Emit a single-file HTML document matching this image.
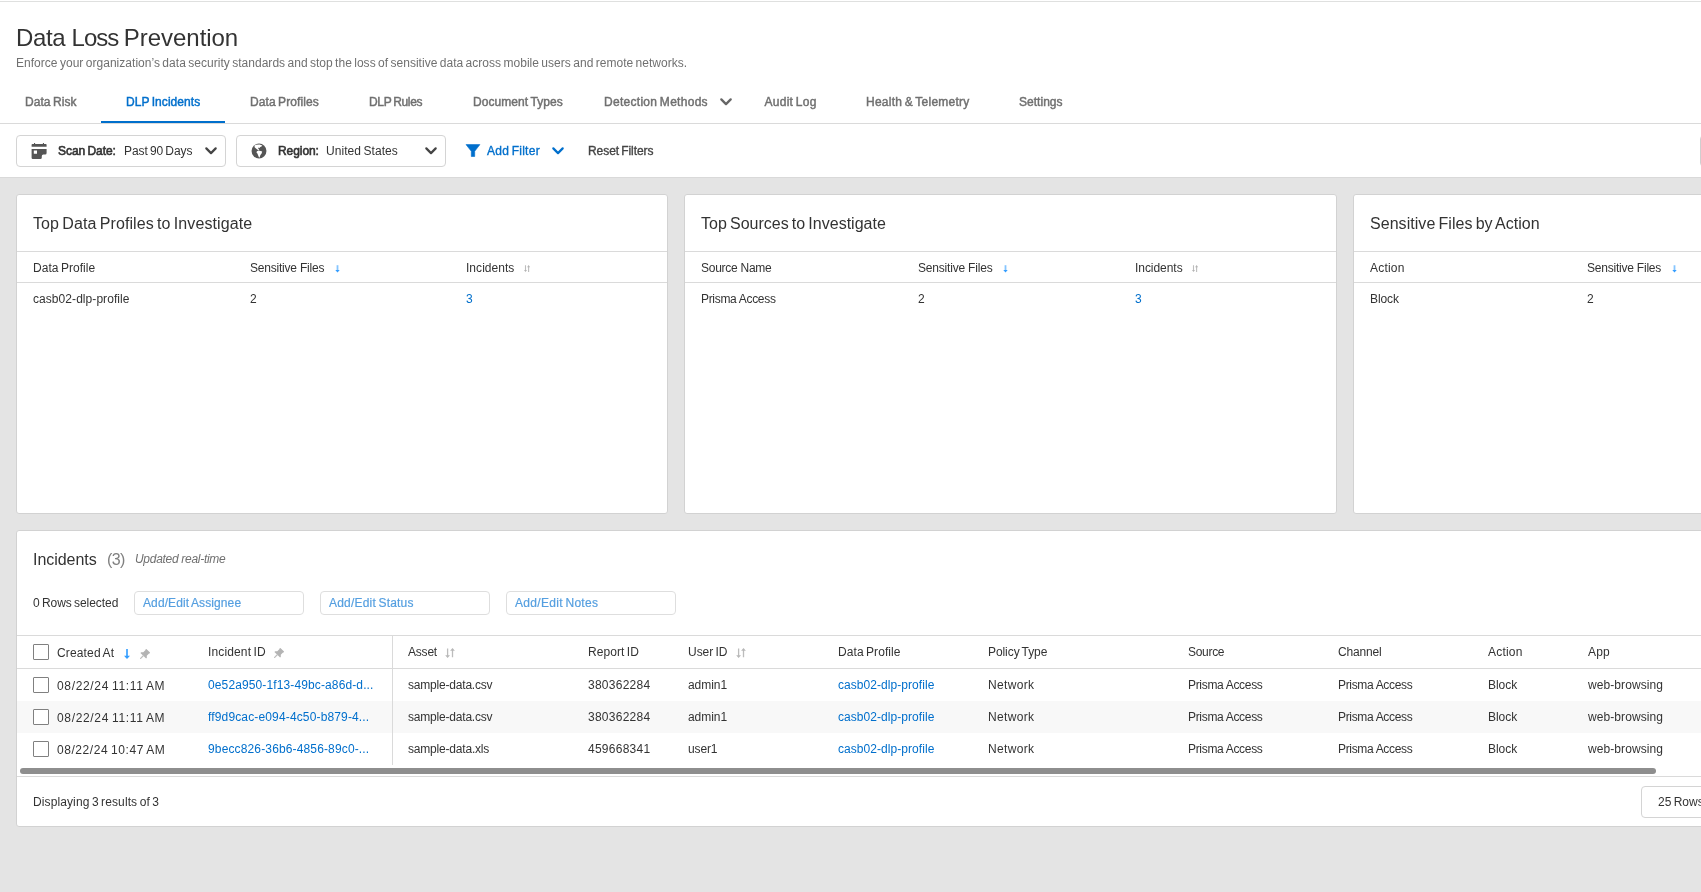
<!DOCTYPE html>
<html lang="en">
<head>
<meta charset="utf-8">
<title>Data Loss Prevention</title>
<style>
*{box-sizing:border-box;margin:0;padding:0}
html,body{width:1701px;height:892px;overflow:hidden;background:#e4e4e4}
body{font-family:"Liberation Sans",sans-serif;font-size:12px;color:#333;position:relative;-webkit-font-smoothing:antialiased}
a{color:#006fcc;text-decoration:none}
svg{display:block}
#app{position:absolute;left:0;top:0;width:1701px;height:892px;will-change:transform}
.abs{position:absolute}
.t{position:absolute;white-space:nowrap;line-height:16px;word-spacing:-0.085em}

/* ---------- header ---------- */
#top{position:absolute;left:0;top:0;width:1701px;height:177px;background:#fff}
#topline{position:absolute;left:0;top:1px;width:1701px;height:1px;background:#dfe0df}
#title{left:16px;top:22px;font-size:24px;line-height:32px;height:32px;width:230px;color:#333;font-weight:400}
#subtitle{left:16px;top:55px;font-size:12px;line-height:16px;color:#707070}

/* ---------- tabs ---------- */
#tabs{position:absolute;left:0;top:80px;width:1701px;height:44px;border-bottom:1px solid #dadada}
#tabs .tab{position:absolute;top:14px;line-height:16px;font-size:12px;font-weight:400;color:#707070;white-space:nowrap;-webkit-text-stroke:0.45px currentColor;word-spacing:-0.085em}
#tabs .tab.on{color:#006fcc}
#tabline{position:absolute;left:101px;top:41px;width:124px;height:2px;background:#006fcc}

/* ---------- filter bar ---------- */
#filters{position:absolute;left:0;top:124px;width:1701px;height:54px;background:#fff;border-bottom:1px solid #d9d9d9}
.dd{position:absolute;top:11px;height:32px;width:210px;border:1px solid #d4d4d4;border-radius:4px;background:#fff}
.dd b{font-weight:400;-webkit-text-stroke:0.6px currentColor}

/* ---------- cards ---------- */
.card{position:absolute;top:194px;height:320px;background:#fff;border:1px solid #d2d2d2;border-radius:3px;overflow:hidden}
.card h2{word-spacing:-0.085em;position:absolute;left:16px;top:19px;font-size:16px;line-height:20px;font-weight:400;color:#333;white-space:nowrap}
.card .hr1{position:absolute;left:0;right:0;top:56px;height:1px;background:#dadada}
.card .hr2{position:absolute;left:0;right:0;top:87px;height:1px;background:#dadada}
.card .th{top:65px}
.card .td{top:96px}

/* ---------- incidents ---------- */
#inc{position:absolute;left:16px;top:530px;width:1700px;height:297px;background:#fff;border:1px solid #d2d2d2;border-radius:3px 0 0 3px;overflow:hidden}
.btn{position:absolute;top:60px;width:170px;height:24px;border:1px solid #dedede;border-radius:4px;background:#fff}
.btn .t{left:8px;top:3px;color:#559fe0;-webkit-text-stroke:0.2px currentColor}
.row{position:absolute;left:0;width:1700px;height:32px}
.row.alt{background:#f8f8f8}
.cb{position:absolute;left:16px;top:8px;width:16px;height:16px;border:1px solid #808080;border-radius:1px;background:#fff}
.row .t{top:8px}
/*FIT-START*/
#tw1{letter-spacing:-0.326px;word-spacing:0em}
#tw2{letter-spacing:-0.96px;word-spacing:0em}
#tw3{letter-spacing:-0.035px;word-spacing:-0.085em}
#subtitle{letter-spacing:0.032px;word-spacing:-0.085em}
#tb1{letter-spacing:0.067px;word-spacing:-0.085em}
#tb2{letter-spacing:0.063px;word-spacing:-0.085em}
#tb3{letter-spacing:0.086px;word-spacing:-0.085em}
#tb4{letter-spacing:-0.327px;word-spacing:0em}
#tb5{letter-spacing:0.071px;word-spacing:-0.085em}
#tb6{letter-spacing:0.285px;word-spacing:-0.085em}
#tb7{letter-spacing:0.268px;word-spacing:-0.085em}
#tb8{letter-spacing:0.249px;word-spacing:-0.085em}
#tb9{letter-spacing:0.03px;word-spacing:-0.085em}
#f1{letter-spacing:-0.046px;word-spacing:-0.085em}
#f2{letter-spacing:-0.077px;word-spacing:-0.085em}
#f3{letter-spacing:-0.068px;word-spacing:-0.085em}
#f4{letter-spacing:0.067px;word-spacing:-0.085em}
#f5{letter-spacing:0.256px;word-spacing:-0.085em}
#f6{letter-spacing:-0.071px;word-spacing:-0.085em}
#c1h{letter-spacing:0.103px;word-spacing:-0.085em}
#c1a{letter-spacing:0.043px;word-spacing:-0.085em}
#c1b{letter-spacing:-0.212px;word-spacing:0em}
#c1c{letter-spacing:0.041px;word-spacing:-0.085em}
#c1d{letter-spacing:0.062px;word-spacing:-0.085em}
#c2h{letter-spacing:0.016px;word-spacing:-0.085em}
#c2a{letter-spacing:-0.261px;word-spacing:0em}
#c2b{letter-spacing:-0.192px;word-spacing:0em}
#c2c{letter-spacing:-0.048px;word-spacing:-0.085em}
#c2d{letter-spacing:-0.314px;word-spacing:0em}
#c3h{letter-spacing:0.05px;word-spacing:-0.085em}
#c3a{letter-spacing:0.207px;word-spacing:-0.085em}
#c3b{letter-spacing:-0.218px;word-spacing:0em}
#c3d{letter-spacing:-0.089px;word-spacing:-0.085em}
#i1{letter-spacing:-0.039px;word-spacing:-0.085em}
#i2{letter-spacing:-0.587px;word-spacing:0em}
#i3{letter-spacing:-0.294px;word-spacing:0em}
#i4{letter-spacing:-0.041px;word-spacing:-0.085em}
#h1{letter-spacing:0.151px;word-spacing:-0.085em}
#h2{letter-spacing:0.141px;word-spacing:-0.085em}
#h3{letter-spacing:-0.203px;word-spacing:0em}
#h4{letter-spacing:0.062px;word-spacing:-0.085em}
#h5{letter-spacing:-0.037px;word-spacing:-0.085em}
#h6{letter-spacing:0.068px;word-spacing:-0.085em}
#h7{letter-spacing:-0.075px;word-spacing:-0.085em}
#h8{letter-spacing:-0.305px;word-spacing:0em}
#h9{letter-spacing:-0.158px;word-spacing:0em}
#h10{letter-spacing:0.207px;word-spacing:-0.085em}
#h11{letter-spacing:0.147px;word-spacing:-0.085em}
#r1a{letter-spacing:0.668px;word-spacing:-0.085em}
#r1b{letter-spacing:0.121px;word-spacing:-0.085em}
#r1c{letter-spacing:-0.198px;word-spacing:0em}
#r1d{letter-spacing:0.258px;word-spacing:-0.085em}
#r1e{letter-spacing:-0.06px;word-spacing:-0.085em}
#r1f{letter-spacing:0.056px;word-spacing:-0.085em}
#r1g{letter-spacing:0.341px;word-spacing:-0.085em}
#r1h{letter-spacing:-0.322px;word-spacing:0em}
#r1i{letter-spacing:-0.337px;word-spacing:0em}
#r1j{letter-spacing:-0.049px;word-spacing:-0.085em}
#r1k{letter-spacing:0.088px;word-spacing:-0.085em}
#r2b{letter-spacing:0.146px;word-spacing:-0.085em}
#r3b{letter-spacing:0.142px;word-spacing:-0.085em}
#r3c{letter-spacing:-0.196px;word-spacing:0em}
#r3e{letter-spacing:-0.126px;word-spacing:0em}
#ft{letter-spacing:0.111px;word-spacing:-0.085em}
#b1{letter-spacing:0.106px;word-spacing:-0.085em}
#b2{letter-spacing:0.2px;word-spacing:-0.085em}
#b3{letter-spacing:0.305px;word-spacing:-0.085em}
#r2a{letter-spacing:0.668px;word-spacing:-0.085em}
#r3a{letter-spacing:0.564px;word-spacing:-0.085em}
#r2c{letter-spacing:-0.198px;word-spacing:0em}
#r2d{letter-spacing:0.258px;word-spacing:-0.085em}
#r3d{letter-spacing:0.258px;word-spacing:-0.085em}
#r2e{letter-spacing:-0.06px;word-spacing:-0.085em}
#r2f{letter-spacing:0.056px;word-spacing:-0.085em}
#r3f{letter-spacing:0.056px;word-spacing:-0.085em}
#r2g{letter-spacing:0.341px;word-spacing:-0.085em}
#r3g{letter-spacing:0.341px;word-spacing:-0.085em}
#r2h{letter-spacing:-0.322px;word-spacing:0em}
#r3h{letter-spacing:-0.322px;word-spacing:0em}
#r2i{letter-spacing:-0.337px;word-spacing:0em}
#r3i{letter-spacing:-0.337px;word-spacing:0em}
#r2j{letter-spacing:-0.049px;word-spacing:-0.085em}
#r3j{letter-spacing:-0.049px;word-spacing:-0.085em}
#r2k{letter-spacing:0.088px;word-spacing:-0.085em}
#r3k{letter-spacing:0.088px;word-spacing:-0.085em}
/*FIT-END*/
</style>
</head>
<body>
<div id="app">
<svg width="0" height="0" style="position:absolute">
  <defs>
    <g id="ic-down-s"><path d="M2.500 0.200V5.400" stroke="#86c5ff" stroke-width="1.800" fill="none"/><path d="M0.3 4.9H4.7L2.5 7.4z" fill="#339dff"/></g>
    <g id="ic-sort-s"><path d="M1.500 0.300V5.600M4.600 1.600V7" stroke="#bdbdbd" stroke-width="1.100" fill="none"/><path d="M0 4.900H3L1.500 7.100z M3.100 2.200H6.100L4.600 0z" fill="#b4b4b4"/></g>
    <g id="ic-down"><path d="M3 0.100V7.600" stroke="#58afff" stroke-width="2" fill="none"/><path d="M0 6.700H6L3 10.100z" fill="#339dff"/></g>
    <g id="ic-sort"><path d="M2.600 0.500V8.200M7.500 1.800V9.300" stroke="#bcbcbc" stroke-width="1.300" fill="none"/><path d="M0.200 7.200H5L2.600 9.900z M5.100 2.800H9.900L7.500 0.100z" fill="#b8b8b8"/></g>
    <g id="ic-pin"><g transform="translate(4.1 5.9) scale(1.18) rotate(45)"><path d="M-2.500-4.900H2.500V-4.100H2.100V-1.100L3.400 0.100V1H-3.400V0.100L-2.100-1.100V-4.100H-2.500z" fill="#b4b4b4"/><path d="M0 1V4.700" stroke="#bdbdbd" stroke-width="1" fill="none"/></g></g>
  </defs>
</svg>

<div id="top">
  <div id="topline"></div>
  <h1 class="t" id="title"><span class="t" id="tw1" style="left:0;top:0;line-height:32px">Data</span> <span class="t" id="tw2" style="left:55.5px;top:0;line-height:32px">Loss</span> <span class="t" id="tw3" style="left:107.8px;top:0;line-height:32px">Prevention</span></h1>
  <p class="t" id="subtitle">Enforce your organization’s data security standards and stop the loss of sensitive data across mobile users and remote networks.</p>
</div>

<div id="tabs">
  <span class="tab" id="tb1" style="left:25px">Data Risk</span>
  <span class="tab on" id="tb2" style="left:126px">DLP Incidents</span>
  <span class="tab" id="tb3" style="left:250px">Data Profiles</span>
  <span class="tab" id="tb4" style="left:369px">DLP Rules</span>
  <span class="tab" id="tb5" style="left:473px">Document Types</span>
  <span class="tab" id="tb6" style="left:604px">Detection Methods</span>
  <svg class="abs" style="left:719px;top:17px" width="14" height="10" viewBox="0 0 14 10"><path d="M2.300 2.400L7 7.100L11.700 2.400" fill="none" stroke="#666" stroke-width="2.300" stroke-linecap="round" stroke-linejoin="round"/></svg>
  <span class="tab" id="tb7" style="left:764.5px">Audit Log</span>
  <span class="tab" id="tb8" style="left:866px">Health &amp; Telemetry</span>
  <span class="tab" id="tb9" style="left:1019px">Settings</span>
  <div id="tabline"></div>
</div>

<div id="filters">
  <div class="dd" style="left:16px">
    <svg class="abs" style="left:14px;top:6px" width="16" height="17" viewBox="0 0 16 17"><path fill="#555" fill-rule="evenodd" d="M3 .9h1.100v1.200H3z M11.900 .9h1.100v1.200h-1.100z M1.400 2H14.800a.8 .8 0 0 1 .8 .8V4.800H.6V2.800a.8 .8 0 0 1 .8-.8z M.6 7.100H15.600V11a1.500 1.500 0 0 1-1.500 1.500H12.300a1.500 1.500 0 0 0-1.500 1.500V15.400a1.500 1.500 0 0 1-1.500 1.500H1.400a.8 .8 0 0 1-.8-.8z M2.800 8.600h3.200v3.100H2.800z"/></svg>
    <span class="t" id="f1" style="left:41px;top:7px"><b>Scan Date:</b></span>
    <span class="t" id="f2" style="left:107px;top:7px">Past 90 Days</span>
    <svg class="abs" style="left:187px;top:10px" width="14" height="10" viewBox="0 0 14 10"><path d="M2.300 2.400L7 7.100L11.700 2.400" fill="none" stroke="#444" stroke-width="2.200" stroke-linecap="round" stroke-linejoin="round"/></svg>
  </div>
  <div class="dd" style="left:236px">
    <svg class="abs" style="left:14px;top:7px" width="16" height="16" viewBox="0 0 16 16"><circle cx="8" cy="8.050" r="7.450" fill="#555"/><path fill="#fff" d="M3.500 2.600L5 1.700 8.500 1.500 11.300 2.500 10.500 3.600 9.300 4 8.600 5 7.500 4.600 7.200 5.800 8.200 6.600 7.600 7.200 6.200 6.500 5 5.600 3.600 4.200z M6 8.200L7.400 7.600 9.600 7.900 11.200 8.600 10.600 10.400 9.400 12 8.600 14.400 8 14.600 7.200 12.600 6.400 10.600 5.400 9.200z"/></svg>
    <span class="t" id="f3" style="left:41px;top:7px"><b>Region:</b></span>
    <span class="t" id="f4" style="left:89px;top:7px">United States</span>
    <svg class="abs" style="left:187px;top:10px" width="14" height="10" viewBox="0 0 14 10"><path d="M2.300 2.400L7 7.100L11.700 2.400" fill="none" stroke="#444" stroke-width="2.200" stroke-linecap="round" stroke-linejoin="round"/></svg>
  </div>
  <svg class="abs" style="left:465px;top:19px" width="16" height="15" viewBox="0 0 16 15"><path fill="#006fcc" stroke="#006fcc" stroke-width="0.600" stroke-linejoin="round" d="M1 1.600H14.900L9.700 8.300V13.500H6.300V8.300z"/></svg>
  <span class="t" id="f5" style="left:487px;top:19px;color:#006fcc;-webkit-text-stroke:0.35px currentColor">Add Filter</span>
  <svg class="abs" style="left:551px;top:22px" width="14" height="10" viewBox="0 0 14 10"><path d="M2.300 2.400L7 7.100L11.700 2.400" fill="none" stroke="#006fcc" stroke-width="2.200" stroke-linecap="round" stroke-linejoin="round"/></svg>
  <span class="t" id="f6" style="left:588px;top:19px;color:#444;-webkit-text-stroke:0.35px currentColor">Reset Filters</span>
  <div class="abs" style="left:1700px;top:11px;width:40px;height:32px;border:1px solid #cfcfcf;border-radius:4px"></div>
</div>

<!-- cards -->
<div class="card" id="c1" style="left:16px;width:652px">
  <h2 id="c1h">Top Data Profiles to Investigate</h2>
  <div class="hr1"></div><div class="hr2"></div>
  <span class="t th" id="c1a" style="left:16px">Data Profile</span>
  <span class="t th" id="c1b" style="left:233px">Sensitive Files</span>
  <span class="t th" id="c1c" style="left:449px">Incidents</span>
  <svg class="abs" style="left:317.5px;top:70px" width="5" height="8"><use href="#ic-down-s"/></svg>
  <svg class="abs" style="left:507px;top:70px" width="7" height="8"><use href="#ic-sort-s"/></svg>
  <span class="t td" id="c1d" style="left:16px">casb02-dlp-profile</span>
  <span class="t td" id="c1e" style="left:233px">2</span>
  <a class="t td" id="c1f" style="left:449px">3</a>
</div>
<div class="card" id="c2" style="left:684px;width:653px">
  <h2 id="c2h">Top Sources to Investigate</h2>
  <div class="hr1"></div><div class="hr2"></div>
  <span class="t th" id="c2a" style="left:16px">Source Name</span>
  <span class="t th" id="c2b" style="left:233px">Sensitive Files</span>
  <span class="t th" id="c2c" style="left:450px">Incidents</span>
  <svg class="abs" style="left:317.5px;top:70px" width="5" height="8"><use href="#ic-down-s"/></svg>
  <svg class="abs" style="left:507px;top:70px" width="7" height="8"><use href="#ic-sort-s"/></svg>
  <span class="t td" id="c2d" style="left:16px">Prisma Access</span>
  <span class="t td" id="c2e" style="left:233px">2</span>
  <a class="t td" id="c2f" style="left:450px">3</a>
</div>
<div class="card" id="c3" style="left:1353px;width:653px">
  <h2 id="c3h">Sensitive Files by Action</h2>
  <div class="hr1"></div><div class="hr2"></div>
  <span class="t th" id="c3a" style="left:16px">Action</span>
  <span class="t th" id="c3b" style="left:233px">Sensitive Files</span>
  <svg class="abs" style="left:317.5px;top:70px" width="5" height="8"><use href="#ic-down-s"/></svg>
  <span class="t td" id="c3d" style="left:16px">Block</span>
  <span class="t td" id="c3e" style="left:233px">2</span>
</div>

<!-- incidents -->
<div id="inc">
  <span class="t" id="i1" style="left:16px;top:19px;font-size:16px;line-height:20px">Incidents</span>
  <span class="t" id="i2" style="left:90px;top:19px;font-size:16px;line-height:20px;color:#808080">(3)</span>
  <span class="t" id="i3" style="left:118px;top:20px;font-style:italic;color:#707070">Updated real-time</span>
  <span class="t" id="i4" style="left:16px;top:64px">0 Rows selected</span>
  <div class="btn" style="left:117px"><span class="t" id="b1">Add/Edit Assignee</span></div>
  <div class="btn" style="left:303px"><span class="t" id="b2">Add/Edit Status</span></div>
  <div class="btn" style="left:489px"><span class="t" id="b3">Add/Edit Notes</span></div>

  <div class="abs" style="left:0;top:104px;width:1700px;height:1px;background:#dadada"></div>
  <div class="row" id="hd" style="top:105px">
    <span class="cb"></span>
    <svg class="abs" style="left:107px;top:13px" width="6" height="11"><use href="#ic-down"/></svg>
    <svg class="abs" style="left:123px;top:13px" width="10" height="10"><use href="#ic-pin"/></svg>
    <svg class="abs" style="left:257px;top:12px" width="10" height="10"><use href="#ic-pin"/></svg>
    <svg class="abs" style="left:428px;top:12px" width="10" height="10"><use href="#ic-sort"/></svg>
    <svg class="abs" style="left:718.5px;top:12px" width="10" height="10"><use href="#ic-sort"/></svg>
    <span class="t" id="h1" style="left:40px;top:9px">Created At</span>
    <span class="t" id="h2" style="left:191px">Incident ID</span>
    <span class="t" id="h3" style="left:391px">Asset</span>
    <span class="t" id="h4" style="left:571px">Report ID</span>
    <span class="t" id="h5" style="left:671px">User ID</span>
    <span class="t" id="h6" style="left:821px">Data Profile</span>
    <span class="t" id="h7" style="left:971px">Policy Type</span>
    <span class="t" id="h8" style="left:1171px">Source</span>
    <span class="t" id="h9" style="left:1321px">Channel</span>
    <span class="t" id="h10" style="left:1471px">Action</span>
    <span class="t" id="h11" style="left:1571px">App</span>
  </div>
  <div class="abs" style="left:0;top:137px;width:1700px;height:1px;background:#dadada"></div>

  <div class="row" id="r1" style="top:138px">
    <span class="cb"></span>
    <span class="t" id="r1a" style="left:40px;top:9px">08/22/24 11:11 AM</span>
    <a class="t" id="r1b" style="left:191px">0e52a950-1f13-49bc-a86d-d...</a>
    <span class="t" id="r1c" style="left:391px">sample-data.csv</span>
    <span class="t" id="r1d" style="left:571px">380362284</span>
    <span class="t" id="r1e" style="left:671px">admin1</span>
    <a class="t" id="r1f" style="left:821px">casb02-dlp-profile</a>
    <span class="t" id="r1g" style="left:971px">Network</span>
    <span class="t" id="r1h" style="left:1171px">Prisma Access</span>
    <span class="t" id="r1i" style="left:1321px">Prisma Access</span>
    <span class="t" id="r1j" style="left:1471px">Block</span>
    <span class="t" id="r1k" style="left:1571px">web-browsing</span>
  </div>
  <div class="row alt" id="r2" style="top:170px">
    <span class="cb"></span>
    <span class="t" id="r2a" style="left:40px;top:9px">08/22/24 11:11 AM</span>
    <a class="t" id="r2b" style="left:191px">ff9d9cac-e094-4c50-b879-4...</a>
    <span class="t" id="r2c" style="left:391px">sample-data.csv</span>
    <span class="t" id="r2d" style="left:571px">380362284</span>
    <span class="t" id="r2e" style="left:671px">admin1</span>
    <a class="t" id="r2f" style="left:821px">casb02-dlp-profile</a>
    <span class="t" id="r2g" style="left:971px">Network</span>
    <span class="t" id="r2h" style="left:1171px">Prisma Access</span>
    <span class="t" id="r2i" style="left:1321px">Prisma Access</span>
    <span class="t" id="r2j" style="left:1471px">Block</span>
    <span class="t" id="r2k" style="left:1571px">web-browsing</span>
  </div>
  <div class="row" id="r3" style="top:202px">
    <span class="cb"></span>
    <span class="t" id="r3a" style="left:40px;top:9px">08/22/24 10:47 AM</span>
    <a class="t" id="r3b" style="left:191px">9becc826-36b6-4856-89c0-...</a>
    <span class="t" id="r3c" style="left:391px">sample-data.xls</span>
    <span class="t" id="r3d" style="left:571px">459668341</span>
    <span class="t" id="r3e" style="left:671px">user1</span>
    <a class="t" id="r3f" style="left:821px">casb02-dlp-profile</a>
    <span class="t" id="r3g" style="left:971px">Network</span>
    <span class="t" id="r3h" style="left:1171px">Prisma Access</span>
    <span class="t" id="r3i" style="left:1321px">Prisma Access</span>
    <span class="t" id="r3j" style="left:1471px">Block</span>
    <span class="t" id="r3k" style="left:1571px">web-browsing</span>
  </div>
  <div class="abs" style="left:375px;top:105px;width:1px;height:129px;background:#dadada"></div>

  <div class="abs" style="left:3px;top:237px;width:1636px;height:6px;border-radius:3px;background:#8e8e8e"></div>
  <div class="abs" style="left:0;top:245px;width:1700px;height:1px;background:#dadada"></div>
  <span class="t" id="ft" style="left:16px;top:263px">Displaying 3 results of 3</span>
  <div class="abs" style="left:1624px;top:255px;width:120px;height:32px;border:1px solid #d4d4d4;border-radius:4px"><span class="t" id="ft2" style="left:16px;top:7px">25 Rows</span></div>
</div>

</div>
</body>
</html>
